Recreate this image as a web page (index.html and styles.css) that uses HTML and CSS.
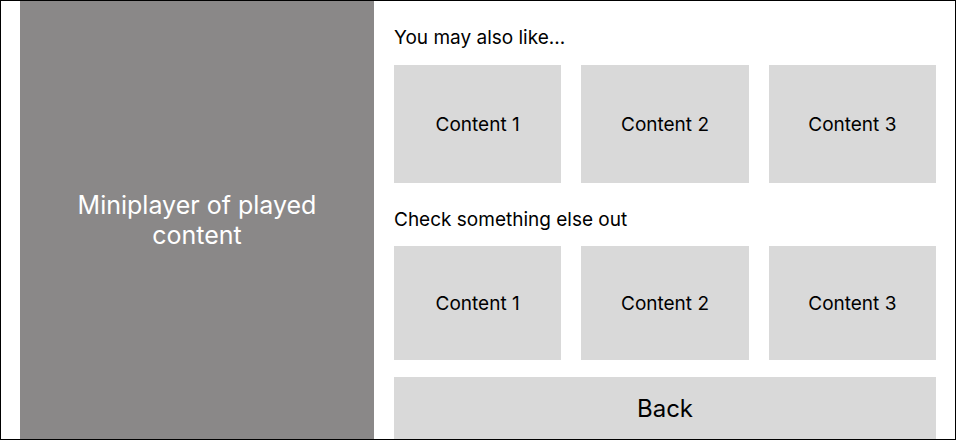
FILE: index.html
```html
<!DOCTYPE html>
<html lang="en">
<head>
<meta charset="utf-8">
<title>Miniplayer</title>
<link rel="stylesheet" href="styles.css">
</head>
<body>
<div class="frame">
  <div class="player">
    <p class="player-label">Miniplayer of played<br>content</p>
  </div>
  <div class="side">
    <h2 class="heading first">You may also like...</h2>
    <div class="cards row-a">
      <div class="card">Content 1</div>
      <div class="card">Content 2</div>
      <div class="card">Content 3</div>
    </div>
    <h2 class="heading second">Check something else out</h2>
    <div class="cards row-b">
      <div class="card">Content 1</div>
      <div class="card">Content 2</div>
      <div class="card">Content 3</div>
    </div>
    <button class="back">Back</button>
  </div>
</div>
</body>
</html>
```

FILE: styles.css
```css
html, body {
  margin: 0;
  padding: 0;
  background: #ffffff;
}

body {
  font-family: Inter, "Noto Sans", sans-serif;
  color: #000000;
}

.frame {
  box-sizing: border-box;
  width: 956px;
  height: 440px;
  border: 1px solid #000000;
  display: flex;
  overflow: hidden;
}

.player {
  margin-left: 19px;
  width: 354px;
  flex: none;
  background: #8a8888;
  display: flex;
  align-items: center;
  justify-content: center;
}

.player-label {
  margin: 0;
  color: #ffffff;
  font-size: 25px;
  line-height: 30px;
  text-align: center;
}

.side {
  flex: 1;
  padding: 25px 19px 0 20px;
  display: flex;
  flex-direction: column;
}

.heading {
  margin: 0;
  font-size: 19px;
  font-weight: 400;
  line-height: 23px;
}

.heading.second {
  margin-top: 25px;
}

.cards {
  display: grid;
  grid-template-columns: 1fr 1fr 1fr;
  gap: 20px;
}

.row-a {
  margin-top: 16px;
  height: 118px;
}

.row-b {
  margin-top: 15px;
  height: 115px;
}

.card {
  background: #d9d9d9;
  display: flex;
  align-items: center;
  justify-content: center;
  font-size: 19px;
  padding-top: 1px;
}

.back {
  margin-top: 17px;
  height: 62px;
  flex: none;
  border: none;
  padding: 0;
  background: #d9d9d9;
  font-family: Inter, "Noto Sans", sans-serif;
  font-size: 24px;
  color: #000000;
}
```
